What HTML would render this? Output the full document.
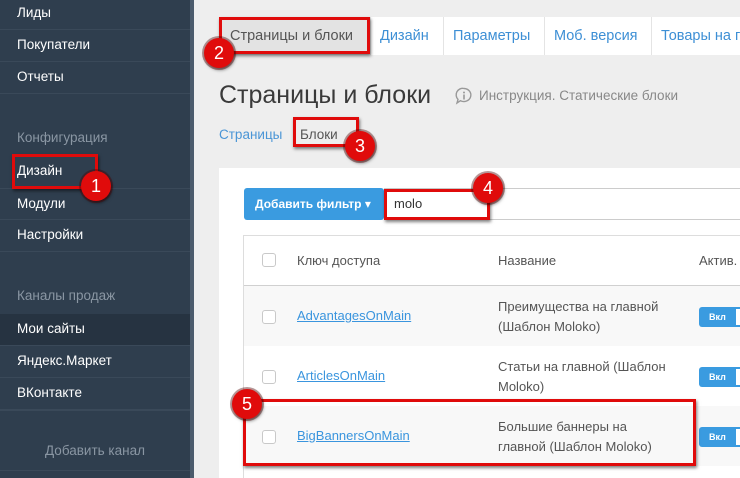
<!DOCTYPE html>
<html><head><meta charset="utf-8"><style>
*{margin:0;padding:0;box-sizing:border-box}
html,body{width:740px;height:478px;overflow:hidden}
body{background:#eeeeee;font-family:"Liberation Sans","DejaVu Sans",sans-serif;position:relative}
.sb{position:absolute;left:0;top:0;width:190px;height:478px;background:#2f3e4e}
.sbb{position:absolute;left:190px;top:0;width:4px;height:478px;background:#4b5b6c}
.it{position:absolute;left:0;width:190px;height:32px;color:#fff;font-size:13.5px;padding-left:17px;line-height:30px;border-bottom:1px solid #3a4959;font-weight:500}
.hd{position:absolute;left:17px;color:#8a96a3;font-size:13.5px}
.a{position:absolute}
.rb{position:absolute;border:3px solid #e00b0b;box-shadow:1px 2px 3px rgba(0,0,0,.5)}
.bd{position:absolute;width:30px;height:30px;border-radius:50%;background:#e00b0b;color:#fff;font-size:18px;text-align:center;line-height:30px;box-shadow:0 0 0 2px rgba(80,0,0,.4),1px 2px 3px rgba(0,0,0,.5)}
.tab{position:absolute;top:17px;height:38px;line-height:38px;color:#3d8fd5;font-size:14.5px;border-left:1px solid #e4e4e4;padding-left:9px;white-space:nowrap;overflow:hidden}
.cb{position:absolute;left:262px;width:14px;height:14px;border:1px solid #c9c9c9;background:#fff;border-radius:3px}
.lk{position:absolute;left:297px;color:#3a95de;text-decoration:underline;font-size:13px}
.nm{position:absolute;left:498px;color:#555;font-size:13px;line-height:20px}
.on{position:absolute;left:699px;width:41px;height:20px;background:#3a9be0;border-radius:3px 0 0 3px;color:#fff;font-size:9px;font-weight:bold;line-height:20px;padding-left:10px;overflow:hidden}
.on:after{content:"";position:absolute;left:37px;top:2px;width:4px;height:16px;background:#fff}
</style></head><body>
<div class="sb"></div><div class="sbb"></div>
<div class="it" style="top:-2px">Лиды</div>
<div class="it" style="top:30px">Покупатели</div>
<div class="it" style="top:62px">Отчеты</div>
<div class="hd" style="top:130px">Конфигурация</div>
<div class="it" style="top:156px;border:none">Дизайн</div>
<div class="it" style="top:188px;border-top:1px solid #3a4959">Модули</div>
<div class="it" style="top:220px">Настройки</div>
<div class="hd" style="top:288px">Каналы продаж</div>
<div class="it" style="top:314px;background:#263341">Мои сайты</div>
<div class="it" style="top:346px">Яндекс.Маркет</div>
<div class="it" style="top:378px">ВКонтакте</div>
<div class="a" style="top:410px;left:0;width:190px;border-top:1px solid #3a4959"></div>
<div class="a" style="top:443px;left:0;width:190px;text-align:center;color:#8a96a3;font-size:13.5px">Добавить канал</div>
<div class="a" style="top:470px;left:0;width:190px;border-top:1px solid #3a4959"></div>

<div class="a" style="left:220px;top:17px;width:520px;height:38px;background:#fff"></div>
<div class="a" style="left:222px;top:17px;width:148px;height:38px;background:#e3e3e3;color:#555;font-size:14.5px;line-height:38px;padding-left:8px">Страницы и блоки</div>
<div class="tab" style="left:370px;width:73px">Дизайн</div>
<div class="tab" style="left:443px;width:101px">Параметры</div>
<div class="tab" style="left:544px;width:107px">Моб. версия</div>
<div class="tab" style="left:651px;width:89px">Товары на главной</div>

<div class="a" style="left:219px;top:81px;font-size:25px;color:#3a3a3a">Страницы и блоки</div>
<svg class="a" style="left:455px;top:87px" width="18" height="18" viewBox="0 0 18 18"><path d="M9 1.5a7 6.5 0 1 1-3.5 12.2L2 16l1-3.6A6.5 6.5 0 0 1 9 1.5z" fill="none" stroke="#999" stroke-width="1.4"/><circle cx="9" cy="5.5" r="1" fill="#999"/><rect x="8.2" y="7.5" width="1.6" height="5" fill="#999"/></svg>
<div class="a" style="left:479px;top:88px;font-size:13.5px;color:#888">Инструкция. Статические блоки</div>
<div class="a" style="left:219px;top:127px;font-size:13.5px;color:#4a95d6">Страницы</div>
<div class="a" style="left:300px;top:127px;font-size:13.5px;color:#555">Блоки</div>

<div class="a" style="left:219px;top:168px;width:521px;height:310px;background:#fff"></div>
<div class="a" style="left:244px;top:188px;width:140px;height:32px;background:#3a9be0;border-radius:3px;color:#fff;font-size:12px;font-weight:bold;line-height:32px;padding-left:11px">Добавить фильтр ▾</div>
<div class="a" style="left:384px;top:188px;width:356px;height:32px;border:1px solid #ccc;border-left:none;border-right:none;font-size:13px;color:#333;line-height:30px;padding-left:10px">molo</div>
<div class="a" style="left:243px;top:235px;width:497px;height:243px;border-left:1px solid #ddd;border-top:1px solid #ddd"></div>
<div class="a" style="left:244px;top:285px;width:496px;height:61px;background:#f8f8f8;border-top:1px solid #d0d0d0"></div>
<div class="a" style="left:244px;top:406px;width:496px;height:60px;background:#f8f8f8"></div>
<div class="cb" style="top:253px"></div>
<div class="a" style="left:297px;top:253px;font-size:13px;color:#555">Ключ доступа</div>
<div class="a" style="left:498px;top:253px;font-size:13px;color:#555">Название</div>
<div class="a" style="left:699px;top:253px;font-size:13px;color:#555">Актив.</div>
<div class="cb" style="top:310px"></div><div class="lk" style="top:308px">AdvantagesOnMain</div>
<div class="nm" style="top:297px">Преимущества на главной<br>(Шаблон Moloko)</div><div class="on" style="top:307px">Вкл</div>
<div class="cb" style="top:370px"></div><div class="lk" style="top:368px">ArticlesOnMain</div>
<div class="nm" style="top:357px">Статьи на главной (Шаблон<br>Moloko)</div><div class="on" style="top:367px">Вкл</div>
<div class="cb" style="top:430px"></div><div class="lk" style="top:428px">BigBannersOnMain</div>
<div class="nm" style="top:417px">Большие баннеры на<br>главной (Шаблон Moloko)</div><div class="on" style="top:427px">Вкл</div>

<div class="rb" style="left:12px;top:154px;width:86px;height:35px"></div>
<div class="rb" style="left:219px;top:17px;width:151px;height:37px"></div>
<div class="rb" style="left:293px;top:117px;width:66px;height:30px"></div>
<div class="rb" style="left:384px;top:189px;width:106px;height:31px"></div>
<div class="rb" style="left:243px;top:399px;width:453px;height:67px"></div>
<div class="bd" style="left:81px;top:171px">1</div>
<div class="bd" style="left:204px;top:38px">2</div>
<div class="bd" style="left:345px;top:131px">3</div>
<div class="bd" style="left:473px;top:173px">4</div>
<div class="bd" style="left:232px;top:389px">5</div>
</body></html>
